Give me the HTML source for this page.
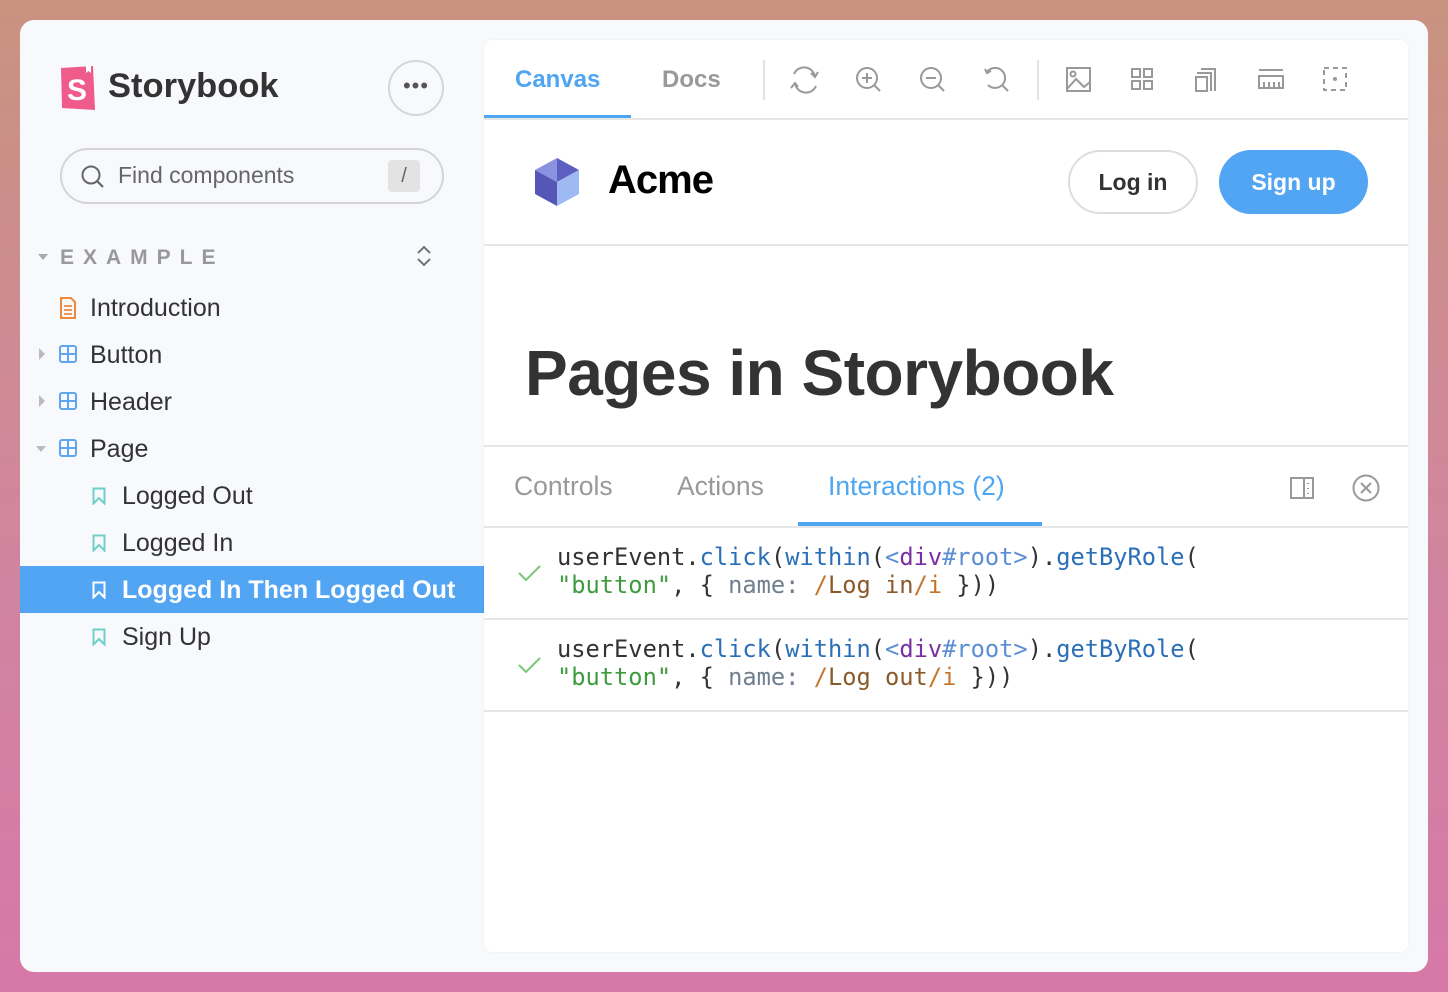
<!DOCTYPE html>
<html><head><meta charset="utf-8"><style>
*{box-sizing:border-box;margin:0;padding:0}
body{width:1448px;height:992px;overflow:hidden;background:linear-gradient(180deg,#c9937f 0%,#d184a0 60%,#d678a8 100%);font-family:"Liberation Sans",sans-serif;position:relative}
.win{position:absolute;left:20px;top:20px;width:1408px;height:952px;background:#f7f9fc;border-radius:14px;overflow:hidden}
.main{position:absolute;left:464px;top:20px;width:924px;height:912px;background:#fff;border-radius:8px;overflow:hidden;box-shadow:0 0 2px rgba(0,0,0,.06)}
.abs{position:absolute}
.side-item{position:absolute;font-size:25px;color:#333;white-space:nowrap}
.hr{position:absolute;left:0;width:924px;height:2px;background:#e6e6e6}
.code{position:absolute;left:73px;font-family:"DejaVu Sans Mono",monospace;font-size:23.7px;line-height:28px;color:#333;white-space:pre}
.f{color:#2a6fb8}.t{color:#7a2fa5}.ts{color:#5b8ed4}.s{color:#3e9b3e}.k{color:#6f7f8f}.r{color:#c5752a}.rb{color:#8a5a2a}
</style></head><body>
<div class="win">
 <svg class="abs" style="left:39px;top:46px" width="38" height="44" viewBox="0 0 38 44"><path d="M2 2 L34 0 L36 44 L3 42 Z" fill="#ef5c8c"/><path d="M27 0 L27 7 L29.5 5 L32 7 L32 0Z" fill="#fff"/><text x="8" y="34" font-family="Liberation Sans" font-weight="bold" font-size="30" fill="#fff">S</text></svg>
 <div class="abs" style="left:88px;top:47px;font-size:34.5px;font-weight:bold;color:#333">Storybook</div>
 <div class="abs" style="left:368px;top:40px;width:56px;height:56px;border:2px solid #d6d6d6;border-radius:50%;text-align:center;line-height:48px;font-size:22px;color:#555;letter-spacing:1px">•••</div>
 <div class="abs" style="left:40px;top:128px;width:384px;height:56px;border:2px solid #d4d4d4;border-radius:28px"></div>
 <svg class="abs" style="left:60px;top:144px" width="26" height="26" viewBox="0 0 26 26"><circle cx="11" cy="11" r="8.5" fill="none" stroke="#666" stroke-width="2"/><path d="M17 17 L23 23" stroke="#666" stroke-width="2.2"/></svg>
 <div class="abs" style="left:98px;top:142px;font-size:23px;color:#666">Find components</div>
 <div class="abs" style="left:368px;top:140px;width:32px;height:32px;background:#e3e3e3;border-radius:4px;text-align:center;line-height:32px;color:#666;font-size:20px">/</div>
 <svg class="abs" style="left:17px;top:232px" width="14" height="10"><path d="M1 2 L11 2 L6 8Z" fill="#aaa"/></svg>
 <div class="abs" style="left:40px;top:226px;font-size:21px;font-weight:bold;color:#999;letter-spacing:9px">EXAMPLE</div>
 <svg class="abs" style="left:395px;top:225px" width="18" height="22"><path d="M3 8 L9 2 L15 8 M3 14 L9 20 L15 14" fill="none" stroke="#666" stroke-width="1.8"/></svg>

 <svg class="abs" style="left:39px;top:277px" width="18" height="22"><path d="M2 1 H12 L16 5 V21 H2 Z" fill="none" stroke="#f0883a" stroke-width="2"/><path d="M5 9 H13 M5 13 H13 M5 17 H13" stroke="#f0883a" stroke-width="1.8"/></svg>
 <div class="side-item" style="left:70px;top:274px">Introduction</div>
 <svg class="abs" style="left:17px;top:327px" width="10" height="14"><path d="M2 1 L8 7 L2 13Z" fill="#bbb"/></svg>
 <svg class="abs" style="left:39px;top:325px" width="18" height="18"><rect x="1" y="1" width="16" height="16" rx="2" fill="none" stroke="#5ea6ef" stroke-width="2"/><path d="M9 1V17M1 9H17" stroke="#5ea6ef" stroke-width="2"/></svg>
 <div class="side-item" style="left:70px;top:321px">Button</div>
 <svg class="abs" style="left:17px;top:374px" width="10" height="14"><path d="M2 1 L8 7 L2 13Z" fill="#bbb"/></svg>
 <svg class="abs" style="left:39px;top:372px" width="18" height="18"><rect x="1" y="1" width="16" height="16" rx="2" fill="none" stroke="#5ea6ef" stroke-width="2"/><path d="M9 1V17M1 9H17" stroke="#5ea6ef" stroke-width="2"/></svg>
 <div class="side-item" style="left:70px;top:368px">Header</div>
 <svg class="abs" style="left:15px;top:424px" width="14" height="10"><path d="M1 2 L11 2 L6 8Z" fill="#bbb"/></svg>
 <svg class="abs" style="left:39px;top:419px" width="18" height="18"><rect x="1" y="1" width="16" height="16" rx="2" fill="none" stroke="#5ea6ef" stroke-width="2"/><path d="M9 1V17M1 9H17" stroke="#5ea6ef" stroke-width="2"/></svg>
 <div class="side-item" style="left:70px;top:415px">Page</div>

 <svg class="abs" style="left:72px;top:467px" width="14" height="18"><path d="M1.5 1.5 H12.5 V16.5 L7 11 L1.5 16.5Z" fill="none" stroke="#6fd0c8" stroke-width="2"/></svg>
 <div class="side-item" style="left:102px;top:462px">Logged Out</div>
 <svg class="abs" style="left:72px;top:514px" width="14" height="18"><path d="M1.5 1.5 H12.5 V16.5 L7 11 L1.5 16.5Z" fill="none" stroke="#6fd0c8" stroke-width="2"/></svg>
 <div class="side-item" style="left:102px;top:509px">Logged In</div>
 <div class="abs" style="left:0;top:546px;width:464px;height:47px;background:#52a5f3"></div>
 <svg class="abs" style="left:72px;top:561px" width="14" height="18"><path d="M1.5 1.5 H12.5 V16.5 L7 11 L1.5 16.5Z" fill="none" stroke="#fff" stroke-width="2"/></svg>
 <div class="side-item" style="left:102px;top:556px;color:#fff;font-weight:bold">Logged In Then Logged Out</div>
 <svg class="abs" style="left:72px;top:608px" width="14" height="18"><path d="M1.5 1.5 H12.5 V16.5 L7 11 L1.5 16.5Z" fill="none" stroke="#6fd0c8" stroke-width="2"/></svg>
 <div class="side-item" style="left:102px;top:603px">Sign Up</div>

 <div class="main">
  <div class="abs" style="left:31px;top:26px;font-size:24px;font-weight:bold;color:#4ea5f2">Canvas</div>
  <div class="abs" style="left:178px;top:26px;font-size:24px;font-weight:bold;color:#999">Docs</div>
  <div class="abs" style="left:0;top:75px;width:147px;height:4px;background:#4ea5f2"></div>
  <div class="hr" style="top:78px"></div>
  <div class="abs" style="left:279px;top:20px;width:2px;height:40px;background:#e3e3e3"></div>
  <div class="abs" style="left:553px;top:20px;width:2px;height:40px;background:#e3e3e3"></div>
  <svg class="abs" style="left:300px;top:20px" width="580" height="40" viewBox="0 0 580 40" fill="none" stroke="#999" stroke-width="2">
   <path d="M10 14 A11 11 0 0 1 31 17 M32 26 A11 11 0 0 1 11 23 M27 13 L31 17 L34 12 M14 27 L11 23 L7 28"/>
   <circle cx="83" cy="18" r="10"/><path d="M90 25 L96 31 M83 13 V23 M78 18 H88"/>
   <circle cx="147" cy="18" r="10"/><path d="M154 25 L160 31 M142 18 H152"/>
   <path d="M203 12 A10 10 0 1 1 204 25 M218 25 L224 31 M201 9 L203 13 L207 11"/>
   <rect x="283" y="8" width="23" height="23"/><circle cx="289" cy="14" r="2.5"/><path d="M283 29 L292 19 L300 27 L306 22"/>
   <rect x="348" y="9" width="8" height="8"/><rect x="360" y="9" width="8" height="8"/><rect x="348" y="21" width="8" height="8"/><rect x="360" y="21" width="8" height="8"/>
   <rect x="412" y="17" width="11" height="14"/><path d="M413 13 H427 V31 M417 9 H431 V31"/>
   <rect x="475" y="16" width="24" height="12"/><path d="M475 10 H499 M480 22V28 M485 22V28 M490 22V28 M495 22V28"/>
   <rect x="540" y="8" width="22" height="22" stroke-dasharray="5 4"/><circle cx="551" cy="19" r="1" fill="#999"/>
  </svg>
  <svg class="abs" style="left:49px;top:117px" width="48" height="50" viewBox="0 0 48 50"><path d="M24 1 L46 13 L24 25 Z" fill="#5c5fc0"/><path d="M24 1 L2 13 L24 25Z" fill="#8a93e0"/><path d="M2 13 L24 25 L24 49 L2 37Z" fill="#5656b7"/><path d="M46 13 L24 25 L24 49 L46 37Z" fill="#9fbaf2"/></svg>
  <div class="abs" style="left:124px;top:118px;font-size:40px;font-weight:bold;color:#000;letter-spacing:-1px">Acme</div>
  <div class="abs" style="left:584px;top:110px;width:130px;height:64px;border:2px solid #ddd;border-radius:32px;text-align:center;line-height:60px;font-size:23px;font-weight:bold;color:#333">Log in</div>
  <div class="abs" style="left:735px;top:110px;width:149px;height:64px;background:#52a5f3;border-radius:32px;text-align:center;line-height:64px;font-size:23px;font-weight:bold;color:#fff">Sign up</div>
  <div class="hr" style="top:204px"></div>
  <div class="abs" style="left:41px;top:296px;font-size:64px;font-weight:bold;color:#333;letter-spacing:-0.5px">Pages in Storybook</div>
  <div class="hr" style="top:405px"></div>
  <div class="abs" style="left:30px;top:431px;font-size:26.5px;color:#999">Controls</div>
  <div class="abs" style="left:193px;top:431px;font-size:26.5px;color:#999">Actions</div>
  <div class="abs" style="left:344px;top:431px;font-size:26.5px;color:#4ea5f2">Interactions (2)</div>
  <div class="abs" style="left:314px;top:482px;width:244px;height:4px;background:#4ea5f2"></div>
  <svg class="abs" style="left:800px;top:430px" width="100" height="36" fill="none" stroke="#999" stroke-width="2"><rect x="7" y="8" width="22" height="20"/><path d="M20 8V28 M24 13v1 M24 18v1 M24 23v1"/><circle cx="82" cy="18" r="12.5"/><path d="M77 13 L87 23 M87 13 L77 23"/></svg>
  <div class="hr" style="top:486px"></div>
  <svg class="abs" style="left:33px;top:522px" width="26" height="22"><path d="M2 11 L9 18 L23 4" fill="none" stroke="#7cc772" stroke-width="2"/></svg>
  <div class="code" style="top:503px">userEvent.<span class="f">click</span>(<span class="f">within</span>(<span class="ts">&lt;</span><span class="t">div</span><span class="ts">#root&gt;</span>).<span class="f">getByRole</span>(
<span class="s">"button"</span>, { <span class="k">name:</span> <span class="r">/</span><span class="rb">Log in</span><span class="r">/i</span> }))</div>
  <div class="hr" style="top:578px"></div>
  <svg class="abs" style="left:33px;top:614px" width="26" height="22"><path d="M2 11 L9 18 L23 4" fill="none" stroke="#7cc772" stroke-width="2"/></svg>
  <div class="code" style="top:595px">userEvent.<span class="f">click</span>(<span class="f">within</span>(<span class="ts">&lt;</span><span class="t">div</span><span class="ts">#root&gt;</span>).<span class="f">getByRole</span>(
<span class="s">"button"</span>, { <span class="k">name:</span> <span class="r">/</span><span class="rb">Log out</span><span class="r">/i</span> }))</div>
  <div class="hr" style="top:670px"></div>
 </div>
</div>
</body></html>
